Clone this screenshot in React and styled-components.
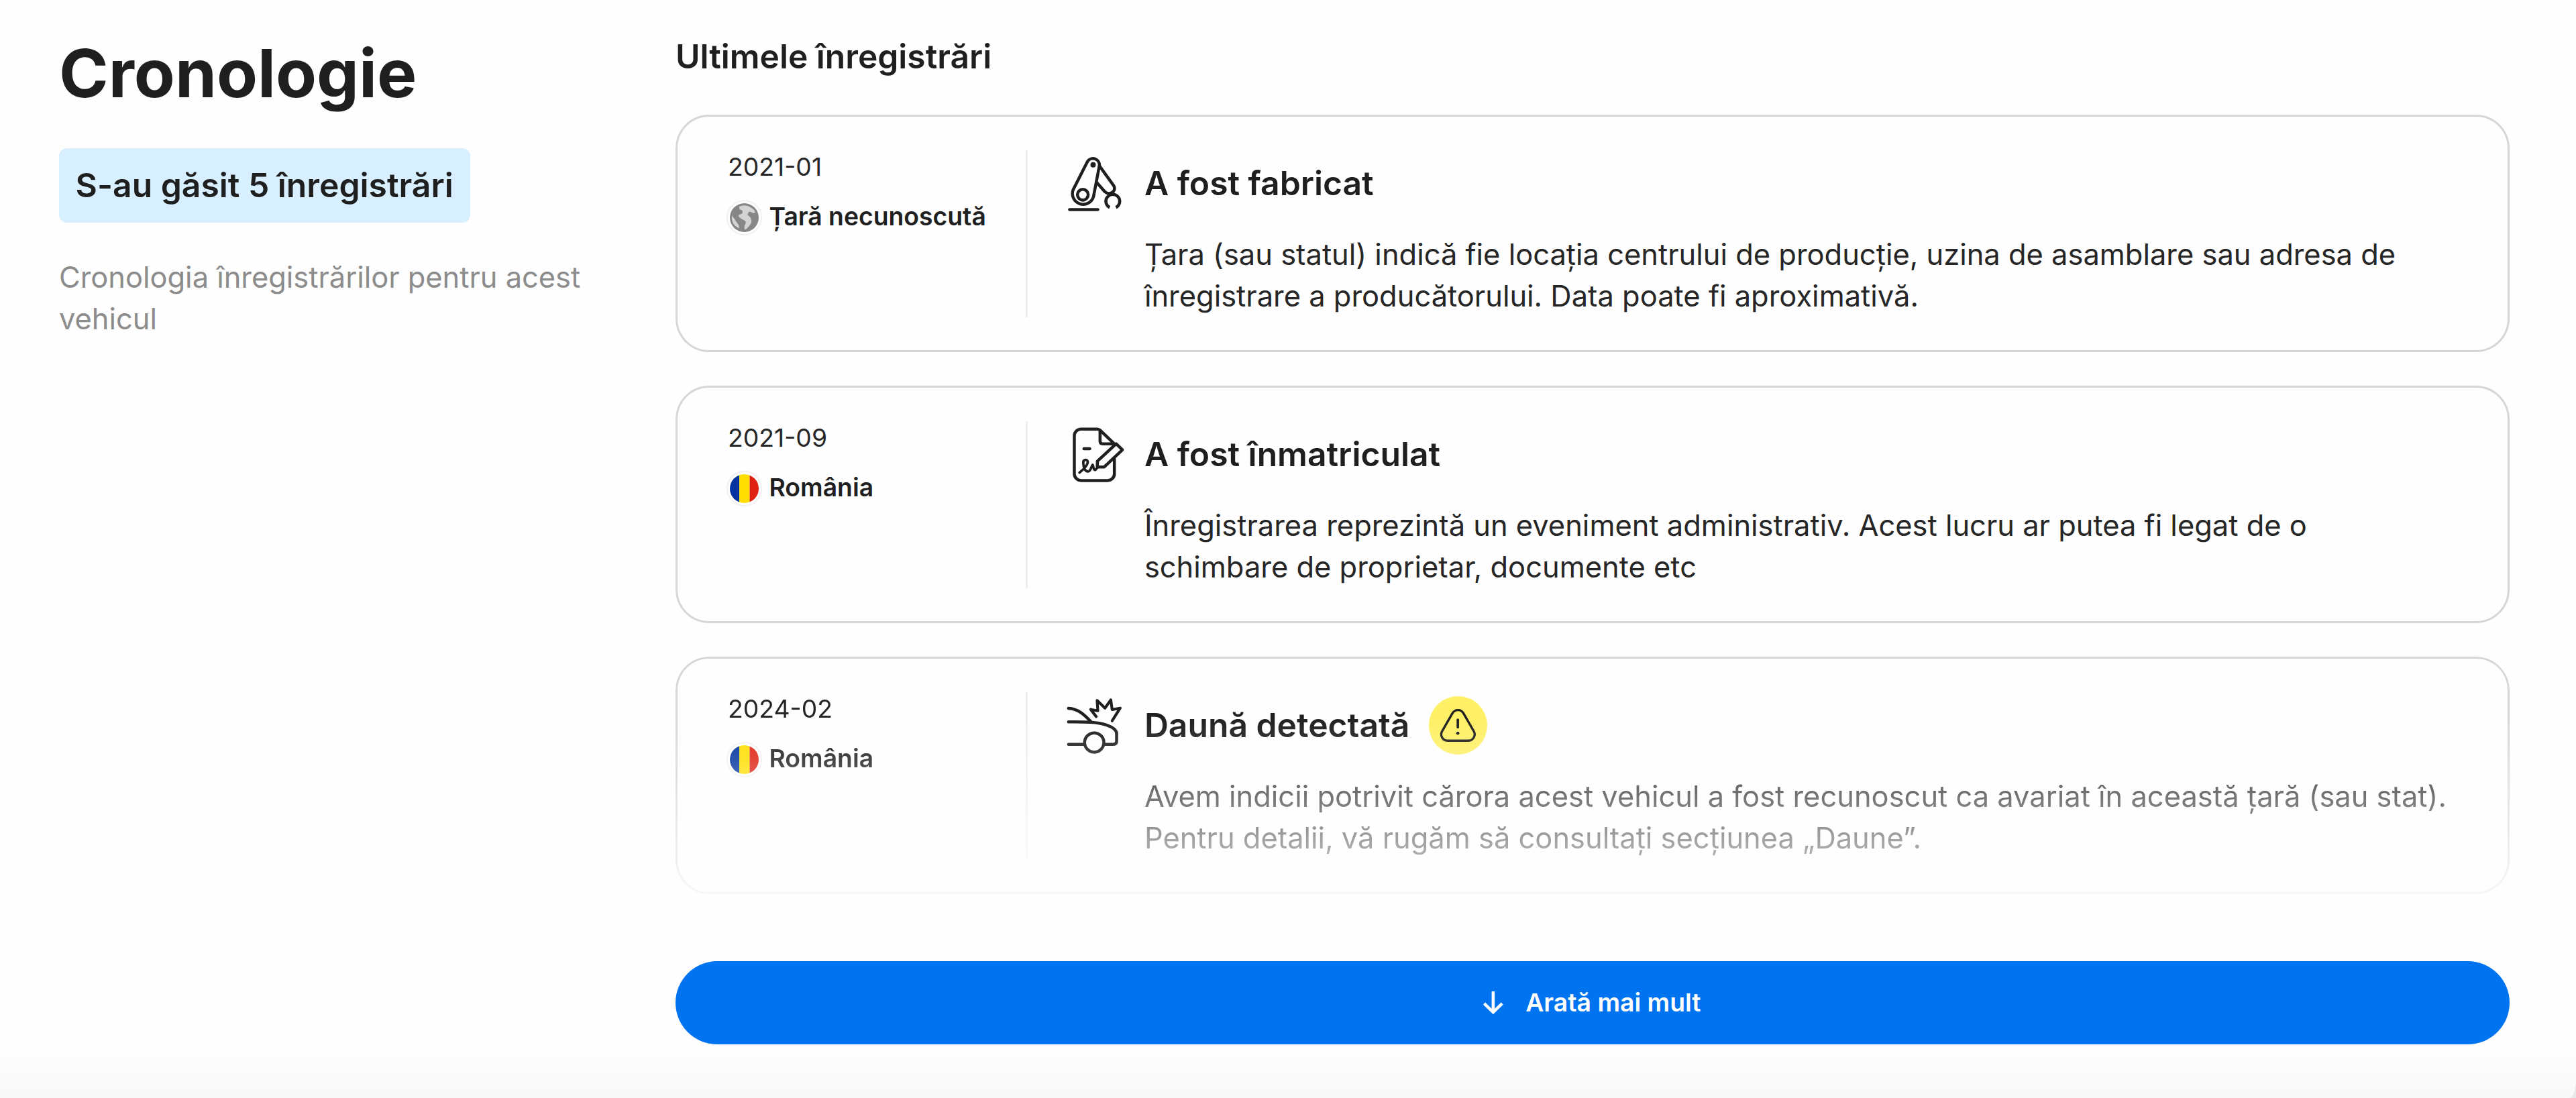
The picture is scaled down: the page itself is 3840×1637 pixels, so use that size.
import React from "react";
import styled, { createGlobalStyle } from "styled-components";

const GlobalStyle = createGlobalStyle`
  * {
    box-sizing: border-box;
  }

  html,
  body {
    margin: 0;
    background: #e9e9e9;
  }

  body {
    font-family: Inter, "Noto Sans", sans-serif;
    color: #1f1f1f;
    overflow: hidden;
  }

  h1,
  h2,
  h3,
  p {
    margin: 0;
  }
`;

const Page = styled.main`
  display: flex;

  width: 3840px;
  height: 1637px;

  padding: 46.5px 99px 0 88px;
  background: linear-gradient(to bottom, #fefefe 1560px, #f8f8f8 1637px);

  border-bottom-right-radius: 10px 27px;
`;

const SidebarContainer = styled.aside`
  display: flex;
  flex-direction: column;
  align-items: flex-start;

  width: 919px;
  flex-shrink: 0;
`;

const PageTitle = styled.h1`
  font-size: 99.6px;
  line-height: 124.2px;
  font-weight: 700;
`;

const CountBadge = styled.div`
  margin-top: 50px;
  padding: 18px 25.5px 19.2px 24.5px;
  background: #d7efff;

  border-radius: 12px;

  > span {
    display: block;

    font-size: 49.8px;
    line-height: 74.5px;
    font-weight: 600;
    white-space: nowrap;
  }
`;

const SidebarText = styled.p`
  width: 820px;
  margin-top: 49.7px;

  font-size: 43.4px;
  line-height: 62.1px;
  color: #8c8c8c;
`;

const RecordsContainer = styled.section`
  flex: 1;
`;

const RecordsTitle = styled.h2`
  font-size: 49.7px;
  line-height: 74.5px;
  font-weight: 600;
`;

const RecordList = styled.div`
  display: flex;
  flex-direction: column;
  gap: 50px;

  margin-top: 50px;
`;

const RecordCard = styled.article`
  display: flex;

  height: 354px;
  padding: 49.5px 75px;
  background: #fefefe;

  border: 3px solid #d6d6d6;
  border-radius: 50px;

  mask-image: ${({ $faded }) =>
    $faded
      ? `linear-gradient(
          to bottom,
          #000 90px,
          rgba(0, 0, 0, 0.84) 151px,
          rgba(0, 0, 0, 0.63) 211px,
          rgba(0, 0, 0, 0.43) 271px,
          rgba(0, 0, 0, 0.2) 354px
        )`
      : "none"};
`;

const RecordOrigin = styled.div`
  display: flex;
  flex-direction: column;
  gap: 25px;

  width: 447px;
  flex-shrink: 0;

  border-right: 3px solid #eeeeee;
`;

const RecordDate = styled.span`
  font-size: 37.3px;
  line-height: 49.7px;
  color: #262626;
`;

const Country = styled.div`
  display: flex;
  align-items: center;
  gap: 11px;

  height: 49.7px;
  margin-left: -2.5px;

  > span {
    font-size: 37.3px;
    line-height: 49.7px;
    font-weight: 600;
    white-space: nowrap;
  }
`;

const FlagRing = styled.div`
  width: 53px;
  height: 53px;
  flex-shrink: 0;

  margin-top: 3px;
  padding: 3px;

  border: 2px solid #f1f1f1;
  border-radius: 50%;

  > svg {
    display: block;
  }
`;

const RecordBody = styled.div`
  flex: 1;
  padding-left: 49.7px;
`;

const RecordHeader = styled.div`
  display: flex;
  align-items: center;
  gap: 24.8px;

  height: 99.4px;

  > svg {
    flex-shrink: 0;
  }
`;

const RecordTitle = styled.h3`
  font-size: 49.8px;
  line-height: 74.5px;
  font-weight: 600;
`;

const RecordText = styled.p`
  margin-top: 25px;
  padding-left: 124.2px;

  font-size: 43.45px;
  line-height: 62.1px;
  color: #262626;
`;

const WarningBadge = styled.div`
  width: 87px;
  height: 87px;

  margin-left: 4px;
  background: #fff066;

  border-radius: 50%;

  > svg {
    display: block;
  }
`;

const ShowMoreButton = styled.button`
  display: flex;
  align-items: center;
  justify-content: center;
  gap: 24px;

  outline: none;
  border: none;
  cursor: pointer;

  width: 100%;
  height: 124px;

  margin-top: 100px;
  padding: 0 12px 0 0;
  background: #0073f1;

  border-radius: 62px;

  > span {
    font-family: Inter, sans-serif;
    font-size: 37.3px;
    line-height: 49.7px;
    font-weight: 600;
    color: #ffffff;
  }
`;

const LineIcon = ({ viewBox, children }) => (
  <svg
    width="99.4"
    height="99.4"
    viewBox={viewBox}
    fill="none"
    stroke="#1f1f1f"
    strokeWidth="13.5"
    strokeLinecap="round"
    strokeLinejoin="round"
  >
    {children}
  </svg>
);

const FactoryIcon = () => (
  <LineIcon viewBox="36.6 41 298 298">
    <path d="M154 91A29 29 0 0 1 207 110L181 247A48 48 0 1 1 90 217Z" />
    <circle cx="133" cy="240" r="24" />
    <circle cx="179" cy="106" r="12" fill="#1f1f1f" stroke="none" />
    <path d="M208 112L270 198Q280 213 269 226Q251 242 232 227L195 185" />
    <path d="M253 297A31 31 0 1 1 281 297" strokeLinecap="butt" />
    <path d="M74 306H200" />
  </LineIcon>
);

const RegistrationIcon = () => (
  <LineIcon viewBox="36.6 23 298 298">
    <path d="M274 190V258A30 30 0 0 1 244 288H125A30 30 0 0 1 95 258V88A30 30 0 0 1 125 58H196Q205 58 211 64L272 122" />
    <path d="M210 64V112Q210 124 222 124H272" />
    <path d="M282 124L310 151L228 228H198V202Z" />
    <path d="M138 146H164" />
    <path
      d="M118 253C136 238 156 218 155 204C153 190 133 194 135 210C137 236 146 251 159 247C170 243 170 226 177 218C182 224 178 242 188 241C195 239 193 230 202 228"
      strokeWidth="11"
    />
  </LineIcon>
);

const DamageIcon = () => (
  <LineIcon viewBox="36.6 35 298 298">
    <path d="M69 107C112 109 140 136 170 168" />
    <path d="M69 168C128 168 190 166 240 182Q284 197 284 220V254Q284 268 270 268H228" />
    <path d="M140 268H69" />
    <circle cx="184" cy="260" r="43" />
    <path
      d="M193 144L168 112L200 118L197 72L232 106L258 69L264 113L300 106L264 163"
      strokeWidth="12.5"
    />
  </LineIcon>
);

const WarningIcon = () => (
  <svg
    width="87"
    height="87"
    viewBox="62 54 260 260"
    fill="none"
    stroke="#1f1f1f"
    strokeWidth="10"
    strokeLinecap="round"
  >
    <path d="M167 130A28 28 0 0 1 216 130L262 210A28 28 0 0 1 240 252H144A28 28 0 0 1 121 210Z" />
    <path d="M191 159V192" strokeWidth="11" />
    <circle cx="191" cy="219" r="7" fill="#1f1f1f" stroke="none" />
  </svg>
);

const RomaniaFlag = () => (
  <svg width="43" height="43" viewBox="0 0 43 43">
    <clipPath id="flag">
      <circle cx="21.5" cy="21.5" r="21.5" />
    </clipPath>
    <g clipPath="url(#flag)">
      <path d="M0 0H14V43H0Z" fill="#00339f" />
      <path d="M14 0H29.5V43H14Z" fill="#ffde00" />
      <path d="M29.5 0H43V43H29.5Z" fill="#de2110" />
    </g>
  </svg>
);

const GlobeFlag = () => (
  <svg width="43" height="43" viewBox="57 69 126 126">
    <circle cx="120" cy="132" r="63" fill="#868686" />
    <path
      d="M97 84Q112 76 128 79Q150 84 164 100L168 110Q158 114 150 108Q142 102 138 110Q132 116 136 122Q148 128 150 140Q154 150 148 160Q142 168 136 174Q132 182 122 185Q118 176 122 166Q128 158 126 148Q118 142 108 138Q98 132 94 124Q98 116 108 116Q114 110 112 102Q108 96 100 97Z"
      fill="#d3d3d3"
    />
    <path
      d="M66 122Q70 132 78 138Q82 148 90 156Q98 164 98 178Q78 172 69 152Q63 138 66 122Z"
      fill="#d3d3d3"
    />
  </svg>
);

const ArrowDownIcon = () => (
  <svg
    width="49.7"
    height="49.7"
    viewBox="0 0 16 16"
    fill="none"
    stroke="#ffffff"
    strokeWidth="1.45"
  >
    <path d="M8 2.6V12.6M3.7 8.4L8 12.6L12.3 8.4" />
  </svg>
);

const records = [
  {
    date: "2021-01",
    country: "Țară necunoscută",
    Flag: GlobeFlag,
    Icon: FactoryIcon,
    title: "A fost fabricat",
    text: "Țara (sau statul) indică fie locația centrului de producție, uzina de asamblare sau adresa de înregistrare a producătorului. Data poate fi aproximativă.",
  },
  {
    date: "2021-09",
    country: "România",
    Flag: RomaniaFlag,
    Icon: RegistrationIcon,
    title: "A fost înmatriculat",
    text: "Înregistrarea reprezintă un eveniment administrativ. Acest lucru ar putea fi legat de o schimbare de proprietar, documente etc",
  },
  {
    date: "2024-02",
    country: "România",
    Flag: RomaniaFlag,
    Icon: DamageIcon,
    title: "Daună detectată",
    text: "Avem indicii potrivit cărora acest vehicul a fost recunoscut ca avariat în această țară (sau stat). Pentru detalii, vă rugăm să consultați secțiunea „Daune”.",
    warning: true,
  },
];

const Timeline = () => {
  return (
    <Page>
      <SidebarContainer>
        <PageTitle>Cronologie</PageTitle>
        <CountBadge>
          <span>S-au găsit 5 înregistrări</span>
        </CountBadge>
        <SidebarText>Cronologia înregistrărilor pentru acest vehicul</SidebarText>
      </SidebarContainer>

      <RecordsContainer>
        <RecordsTitle>Ultimele înregistrări</RecordsTitle>

        <RecordList>
          {records.map(({ date, country, Flag, Icon, title, text, warning }, index) => (
            <RecordCard key={date} $faded={index === records.length - 1}>
              <RecordOrigin>
                <RecordDate>{date}</RecordDate>
                <Country>
                  <FlagRing>
                    <Flag />
                  </FlagRing>
                  <span>{country}</span>
                </Country>
              </RecordOrigin>

              <RecordBody>
                <RecordHeader>
                  <Icon />
                  <RecordTitle>{title}</RecordTitle>
                  {warning && (
                    <WarningBadge>
                      <WarningIcon />
                    </WarningBadge>
                  )}
                </RecordHeader>
                <RecordText>{text}</RecordText>
              </RecordBody>
            </RecordCard>
          ))}
        </RecordList>

        <ShowMoreButton>
          <ArrowDownIcon />
          <span>Arată mai mult</span>
        </ShowMoreButton>
      </RecordsContainer>
    </Page>
  );
};

const App = () => (
  <>
    <GlobalStyle />
    <Timeline />
  </>
);

export default App;
